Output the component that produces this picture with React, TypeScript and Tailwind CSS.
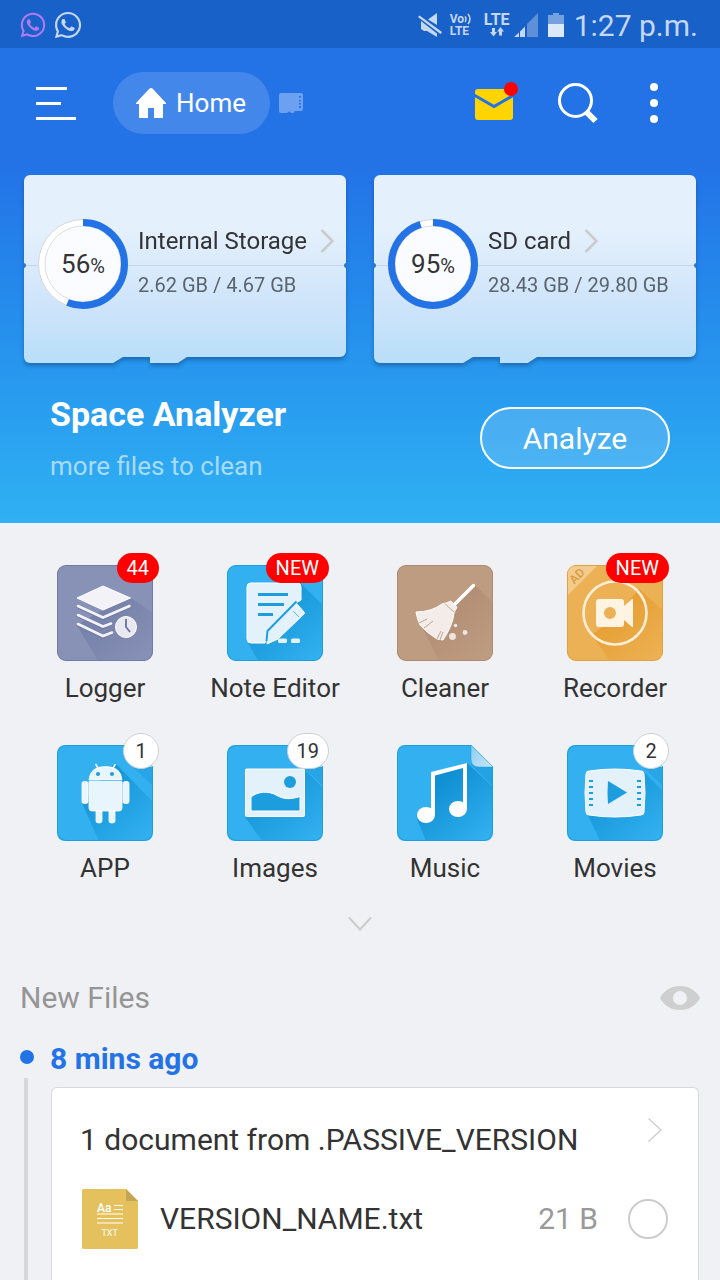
import type { ReactNode } from "react";
import { FaWhatsapp } from "react-icons/fa";

type Tile = {
  name: string;
  icon: ReactNode;
  badge?: string;
  alert?: boolean;
};

const tiles: Tile[] = [
  { name: "Logger", icon: <LoggerIcon />, badge: "44", alert: true },
  { name: "Note Editor", icon: <NoteIcon />, badge: "NEW", alert: true },
  { name: "Cleaner", icon: <CleanerIcon /> },
  { name: "Recorder", icon: <RecorderIcon />, badge: "NEW", alert: true },
  { name: "APP", icon: <AndroidIcon />, badge: "1" },
  { name: "Images", icon: <ImagesIcon />, badge: "19" },
  { name: "Music", icon: <MusicIcon /> },
  { name: "Movies", icon: <MoviesIcon />, badge: "2" },
];

export default function App() {
  return (
    <div className="flex min-h-screen flex-col bg-[#f0f1f4] font-['Roboto',sans-serif] text-[#333333]">
      <StatusBar />
      <div className="bg-linear-to-b from-[#2373e7] from-25% to-[#30b1f3] pb-[41px]">
        <Header />
        <section className="mt-[41px] grid grid-cols-2 gap-7 px-6">
          <StorageCard name="Internal Storage" usage="2.62 GB / 4.67 GB" percent={56} />
          <StorageCard name="SD card" usage="28.43 GB / 29.80 GB" percent={95} />
        </section>
        <section className="mt-[31px] flex items-center justify-between px-[50px]">
          <div>
            <h2 className="text-[34px] leading-10 font-bold text-white">Space Analyzer</h2>
            <p className="mt-4 text-[26px] leading-8 text-white/60">more files to clean</p>
          </div>
          <button className="h-[62px] w-[190px] rounded-full border-2 border-white bg-white/15 text-[30px] text-white">
            Analyze
          </button>
        </section>
      </div>

      <ul className="grid grid-cols-4 gap-y-[41px] px-5 pt-[42px]">
        {tiles.map((t) => (
          <li key={t.name}>
            <TileButton tile={t} />
          </li>
        ))}
      </ul>
      <button aria-label="Show more" className="mt-8 self-center">
        <svg className="h-4 w-6" viewBox="0 0 24 16" fill="none" stroke="#cccccc" strokeWidth="2">
          <path d="M1 1.500 12 13.500 23 1.500" />
        </svg>
      </button>

      <section className="mt-12 flex flex-1 flex-col px-5">
        <div className="flex items-center justify-between">
          <h2 className="text-[30px] leading-9 text-[#959595]">New Files</h2>
          <button aria-label="Toggle visibility">
            <svg className="h-6 w-10" viewBox="0 0 40 24">
              <path
                fill="#cfcfcf"
                fillRule="evenodd"
                d="M0 12C4 4.500 11 0 20 0S36 4.500 40 12C36 19.500 29 24 20 24S4 19.500 0 12ZM20 5A7 7 0 1 0 20 19A7 7 0 1 0 20 5Z"
              />
            </svg>
          </button>
        </div>
        <div className="mt-[25px] flex flex-1 gap-4">
          <div className="flex w-[14px] flex-col">
            <span className="mt-[9px] size-[14px] rounded-full bg-[#2373e7]" />
            <span className="mt-[14px] ml-1 w-1 flex-1 bg-[#d6d7d9]" />
          </div>
          <div className="flex flex-1 flex-col">
            <h3 className="text-[30px] leading-9 font-bold text-[#2373e7]">8 mins ago</h3>
            <FileCard />
          </div>
        </div>
      </section>
    </div>
  );
}

function StatusBar() {
  return (
    <div className="flex h-12 items-center bg-[#1861c8] pt-[2px] pr-[22px] pl-[19px] text-[#c5d7f2]">
      <FaWhatsapp className="size-7 text-[#b27af0]" />
      <FaWhatsapp className="ml-[6px] size-[30px]" />
      <svg className="ml-auto h-6 w-6" viewBox="0 0 24 24" fill="currentColor">
        <path d="M19 0V12L10 6.500ZM3 8 19 20.500V24L9 18H6L3 16ZM0 4 1.500 2.500 24 19 22.500 21Z" />
      </svg>
      <div className="ml-2 w-6 text-[12px] leading-3 font-bold">
        <div className="flex items-center">
          Vo
          <svg className="h-3 w-2" viewBox="0 0 8 12" fill="none" stroke="currentColor" strokeWidth="1.500">
            <path d="M1 3.500Q3 6 1 9M4 1Q8 6 4 11" />
          </svg>
        </div>
        <div>LTE</div>
      </div>
      <div className="ml-[10px] flex w-[26px] flex-col items-center">
        <span className="text-[16px] leading-[14px] font-bold">LTE</span>
        <svg className="h-[10px] w-4" viewBox="0 0 16 10" fill="currentColor">
          <path d="M3 1H6V5H8L4.500 9.500 1 5H3ZM10 8.500H13V4.500H15L11.500 0 8 4.500H10Z" />
        </svg>
      </div>
      <svg className="ml-1 h-6 w-6" viewBox="0 0 24 24" fill="currentColor">
        <path d="M0 24 5 19.500V24ZM6 18.500 11 13.500V24H6Z" />
        <path d="M13 11 24 0V24H13Z" opacity=".4" />
      </svg>
      <svg className="ml-[10px] h-6 w-4" viewBox="0 0 16 24" fill="currentColor">
        <path d="M5 0H11V2H16V11H0V2H5Z" opacity=".55" />
        <path d="M0 11H16V24H0Z" fill="#dce7f7" />
      </svg>
      <span className="ml-[10px] pt-[2px] text-[30px] leading-9">1:27 p.m.</span>
    </div>
  );
}

function Header() {
  return (
    <header className="flex items-center pt-6 pr-[51px] pl-9">
      <button aria-label="Menu">
        <svg className="h-[34px] w-10" viewBox="0 0 40 34" fill="#ffffff">
          <path d="M0 1H31V4H0ZM0 16H25V19H0ZM0 31H40V34H0Z" />
        </svg>
      </button>
      <button className="ml-[37px] flex h-[62px] items-center gap-[10px] rounded-full bg-white/15 pr-6 pl-[23px] text-[26px] text-white">
        <svg className="h-[30px] w-[30px]" viewBox="0 0 30 30" fill="#ffffff">
          <path d="M13.500.600Q15-.600 16.500.600L30 15V16H27V30H18V20H12V30H3V16H0V15Z" />
        </svg>
        Home
      </button>
      <button aria-label="SD card" className="ml-[9px]">
        <svg className="h-5 w-6" viewBox="0 0 24 20">
          <path
            fill="#6ba1f0"
            d="M2 0H22Q24 0 24 2V16Q24 18 22 18H16L14.500 20H11.500V18.500H10L8 20H2Q0 20 0 18V2Q0 0 2 0Z"
          />
          <path d="M20 3h2v1.500h-2zM20 7h2v1.500h-2zM20 10h2v1.500h-2zM20 13h2v2h-2z" fill="#2373e7" />
        </svg>
      </button>
      <div className="ml-auto flex items-center gap-10">
        <button aria-label="Messages">
          <svg className="h-[42px] w-11 overflow-visible" viewBox="0 0 44 42">
            <rect x="2" y="7" width="38" height="31" rx="3" fill="#ffd400" />
            <path d="M1 13 21 24.500 41 13" fill="none" stroke="#2373e7" strokeWidth="3" />
            <circle cx="38" cy="7" r="7" fill="#ff0000" />
          </svg>
        </button>
        <button aria-label="Search">
          <svg className="h-[42px] w-[42px]" viewBox="0 0 42 42" fill="none" stroke="#ffffff">
            <circle cx="18.500" cy="18.500" r="16" strokeWidth="3" />
            <path d="M29 29.500 38.500 39" strokeWidth="6" />
          </svg>
        </button>
        <button aria-label="More options">
          <svg className="h-10 w-[30px]" viewBox="0 0 30 40" fill="#ffffff">
            <circle cx="15" cy="4" r="4" />
            <circle cx="15" cy="20" r="4" />
            <circle cx="15" cy="36" r="4" />
          </svg>
        </button>
      </div>
    </header>
  );
}

function StorageCard({ name, usage, percent }: { name: string; usage: string; percent: number }) {
  const circumference = 2 * Math.PI * 41.5;
  return (
    <article className="relative drop-shadow-[0_3px_2px_rgba(10,60,120,0.45)]">
      <div className="relative flex h-[182px] gap-[10px] overflow-hidden rounded-md rounded-bl-none bg-linear-to-b from-[#e4f0fc] from-30% via-[#d2e6fb] via-65% to-[#bbdff9] pt-11 pl-[14px]">
        <span className="absolute inset-x-0 top-[90px] h-px bg-[#c5d6e8]" />
        <span className="absolute top-[88px] -left-[3px] size-[5px] rounded-full bg-[#2878cc]" />
        <span className="absolute top-[88px] -right-[3px] size-[5px] rounded-full bg-[#2878cc]" />
        <div className="relative size-[90px] shrink-0">
          <svg className="size-full" viewBox="0 0 90 90" fill="none">
            <circle cx="45" cy="45" r="44.500" fill="#ffffff" stroke="#d3d6da" />
            <circle cx="45" cy="45" r="38" fill="#fbfcff" stroke="#dddfe2" />
            <circle
              cx="45"
              cy="45"
              r="41.500"
              stroke="#2373e7"
              strokeWidth="7"
              strokeDasharray={`${(circumference * percent) / 100} ${circumference}`}
              transform="rotate(-90 45 45)"
            />
          </svg>
          <p className="absolute inset-0 flex items-baseline justify-center pt-[30px] text-[26px] leading-[30px]">
            {percent}
            <span className="text-[20px]">%</span>
          </p>
        </div>
        <div className="relative pt-[6px]">
          <a href="#" className="flex items-center gap-[13px] text-[24px] leading-8 whitespace-nowrap">
            {name}
            <svg className="h-6 w-[14px]" viewBox="0 0 14 24" fill="none" stroke="#cbcbcd" strokeWidth="2.500">
              <path d="M1.500 1 12.500 12 1.500 23" />
            </svg>
          </a>
          <p className="mt-4 text-[20px] leading-6 whitespace-nowrap text-[#5a646c]">{usage}</p>
        </div>
      </div>
      <div className="flex gap-[27px]">
        <span className="h-[6px] w-[99px] rounded-bl-md bg-[#bbdff9] [clip-path:polygon(0_0,100%_0,90%_100%,0_100%)]" />
        <span className="h-[6px] w-[37px] bg-[#bbdff9] [clip-path:polygon(0_0,100%_0,75%_100%,0_100%)]" />
      </div>
    </article>
  );
}

function TileButton({ tile }: { tile: Tile }) {
  return (
    <button className="flex w-full flex-col items-center">
      <span className="relative">
        {tile.icon}
        {tile.badge && tile.alert && (
          <span className="absolute -top-3 -right-[6px] h-[30px] rounded-full bg-[#ff0000] px-[10px] text-[20px] leading-[30px] text-white">
            {tile.badge}
          </span>
        )}
        {tile.badge && !tile.alert && (
          <span className="absolute -top-3 -right-[6px] h-9 min-w-9 rounded-full border border-[#cfd0d3] bg-white px-[9px] text-[20px] leading-[34px]">
            {tile.badge}
          </span>
        )}
      </span>
      <span className="mt-[11px] text-[26px] leading-8 whitespace-nowrap">{tile.name}</span>
    </button>
  );
}

function FileCard() {
  return (
    <article className="mx-px mt-[10px] flex-1 rounded-t-md border border-b-0 border-[#d9dadc] bg-white pr-[30px] pb-[30px] pl-7">
      <a href="#" className="flex items-start justify-between pt-[30px]">
        <h4 className="pt-1 text-[30px] leading-9">1 document from .PASSIVE_VERSION</h4>
        <svg className="mr-[6px] h-6 w-[14px]" viewBox="0 0 14 24" fill="none" stroke="#cfcfcf" strokeWidth="1.500">
          <path d="M.500.500 13 12 .500 23.500" />
        </svg>
      </a>
      <label className="mt-[31px] flex items-center">
        <TextFileIcon />
        <span className="ml-[22px] text-[30px] leading-9">VERSION_NAME.txt</span>
        <span className="ml-auto text-[30px] leading-9 text-[#999999]">21 B</span>
        <input
          type="checkbox"
          className="ml-[30px] size-10 appearance-none rounded-full border-2 border-[#cccccc] bg-white checked:bg-[#2373e7]"
        />
      </label>
    </article>
  );
}

function TextFileIcon() {
  return (
    <svg className="ml-[2px] h-[60px] w-14" viewBox="0 0 56 60">
      <path d="M1.500 0H44L56 12V58.500Q56 60 54.500 60H1.500Q0 60 0 58.500V1.500Q0 0 1.500 0Z" fill="#e5c15e" />
      <path d="M44 0 56 12H44Z" fill="#c4a553" />
      <path d="M32 16.500H41M32 20.500H41M15 25H41M15 29.500H41M15 34H41" stroke="#ffffff" strokeWidth="1.200" />
      <text x="15" y="22.500" fontSize="12" fontWeight="500" fill="#ffffff">
        Aa
      </text>
      <text x="19.500" y="47" fontSize="9" fill="#ffffff">
        TXT
      </text>
    </svg>
  );
}

// rounded square behind every tile drawing, with its long shadow cast to the lower right
function Base({
  id,
  fill,
  edge,
  shade,
  shadow,
  fold,
  children,
}: {
  id: string;
  fill: string;
  edge: string;
  shade: string;
  shadow: string;
  fold?: boolean;
  children: ReactNode;
}) {
  return (
    <svg className="block size-24" viewBox="0 0 96 96">
      <defs>
        <linearGradient id={`${id}-shade`} gradientUnits="userSpaceOnUse" x1="40" y1="40" x2="88" y2="96">
          <stop offset="0" stopColor={shade} />
          <stop offset="1" stopColor={shade} stopOpacity="0" />
        </linearGradient>
        <linearGradient id={`${id}-fold`} x1="0" y1="0" x2="1" y2="1">
          <stop offset="0" stopColor="#8accf2" />
          <stop offset="1" stopColor="#c9e7f8" />
        </linearGradient>
        <clipPath id={`${id}-clip`}>
          {fold ? (
            <path d="M9 0H74L96 22V87Q96 96 87 96H9Q0 96 0 87V9Q0 0 9 0Z" />
          ) : (
            <rect width="96" height="96" rx="9" />
          )}
        </clipPath>
      </defs>
      <g clipPath={`url(#${id}-clip)`}>
        <rect width="96" height="96" fill={fill} />
        <path d={shadow} fill={`url(#${id}-shade)`} />
        {fold && <path d="M74 0 96 22V41L74 20Z" fill={shade} opacity=".4" />}
        <rect x=".5" y=".5" width="95" height="95" rx="8.500" fill="none" stroke={edge} />
      </g>
      {fold && <path d="M74 0 96 22H82Q74 22 74 14Z" fill={`url(#${id}-fold)`} stroke={edge} strokeWidth=".5" />}
      {children}
    </svg>
  );
}

function LoggerIcon() {
  return (
    <Base id="logger" fill="#8891b6" edge="#707ba8" shade="#7480a8" shadow="M20 60 41 96H96V48L74 33 46 45Z">
      <g stroke="#707ba8" strokeWidth="4" fill="none">
        <path d="M20 41 46 53 73 41M20 50 46 62 54 58.500M20 59 46 71.500 55 67.500" />
      </g>
      <path d="M20 33 46 21 73.500 33 46 45Z" fill="#f3f3f7" stroke="#ffffff" strokeLinejoin="round" />
      <g stroke="#f4f4f8" strokeWidth="2.600" fill="none" strokeLinecap="round">
        <path d="M21 41 46 52.500 72.500 41M21 50 46 61.500 54 58.500M21 59 46 71 55 67.500" />
      </g>
      <circle cx="69" cy="62" r="10.500" fill="#e8e8f0" stroke="#ffffff" />
      <path d="M69 54V62L73 67" fill="none" stroke="#707ba8" strokeWidth="2" />
    </Base>
  );
}

function NoteIcon() {
  return (
    <Base id="note" fill="#32b0f0" edge="#1c9ddd" shade="#1696d8" shadow="M20 76 31 96H96V40L73 18 60 60Z">
      <path
        d="M24 18H70Q74 18 74 22V35L69 38 41 66 38 78H24Q20 78 20 74V22Q20 18 24 18Z"
        fill="#e2f1fa"
        stroke="#ffffff"
      />
      <path d="M31 29.500H61M31 39.500H57M31 49.500H46" stroke="#1c9ddd" strokeWidth="3" />
      <path
        d="M40 79 41 67 68 39Q69 38 70 39L77 47Q78 48 77 49L51 74Z"
        fill="#e2f1fa"
        stroke="#ffffff"
        strokeLinejoin="round"
      />
      <path d="M39.500 76 40.500 66 69.500 36.500" fill="none" stroke="#1c9ddd" strokeWidth="2" />
      <path d="M66 46 72 52" stroke="#1c9ddd" strokeDasharray="1 .5" />
      <rect x="51" y="73.500" width="9" height="4.500" rx="1.500" fill="#e2f1fa" />
      <rect x="64" y="73.500" width="9" height="4.500" rx="1.500" fill="#e2f1fa" />
    </Base>
  );
}

function CleanerIcon() {
  return (
    <Base id="cleaner" fill="#be9c82" edge="#ae8a70" shade="#b08c73" shadow="M19 50 42 96H96V38L78 20 50 45Z">
      <path d="M76.500 20.500 57 40" stroke="#ffffff" strokeWidth="3.500" strokeLinecap="round" />
      <path
        d="M19 47Q34 47 45 39Q50 38 54 36L60 42Q58 46 57 48Q56 60 46 75L40 74Q30 68 23 60Q20 54 19 47Z"
        fill="#f3ece8"
        stroke="#ffffff"
        strokeLinejoin="round"
      />
      <path
        d="M48 38.500Q52 43 57 47M22 58 30 54M27 63 36 56M40 74 44 66M43 75 46 67"
        fill="none"
        stroke="#c2a48f"
        strokeWidth="1"
      />
      <g fill="#f0e5de">
        <circle cx="58.500" cy="60.500" r="1.800" />
        <circle cx="68" cy="67.500" r="2.400" />
        <circle cx="55.500" cy="71.500" r="3.400" />
      </g>
    </Base>
  );
}

function RecorderIcon() {
  return (
    <Base id="recorder" fill="#ecb155" edge="#e2a03c" shade="#e69d2e" shadow="M25 70 43 96H96V45L72 24 50 50Z">
      <path d="M1 30V9Q1 1 9 1H30Z" fill="#f3cb8c" />
      <text y="4" fontSize="12" fontWeight="500" fill="#d99c3f" textAnchor="middle" transform="translate(10 11) rotate(-45)">
        AD
      </text>
      <circle cx="48" cy="48" r="31.500" fill="none" stroke="#fdeed8" strokeWidth="2.600" />
      <path
        fill="#fff3e2"
        fillRule="evenodd"
        d="M32 34H54Q57 34 57 37V41L65 34H66V62H65L57 55V59Q57 62 54 62H32Q29 62 29 59V37Q29 34 32 34ZM43 42A6 6 0 1 0 43 54A6 6 0 1 0 43 42Z"
      />
    </Base>
  );
}

function AndroidIcon() {
  return (
    <Base id="android" fill="#32b0f0" edge="#1c9ddd" shade="#1696d8" shadow="M25 58 42 96H96V57L58 18Z" fold>
      <g fill="#e8f5fc" stroke="#ffffff" strokeWidth=".8">
        <path d="M32 35Q33 21.500 48.500 21.500T65 35Z" />
        <path d="M32 36.500H65V63Q65 66 62 66H35Q32 66 32 63Z" />
        <rect x="25" y="36.500" width="6" height="22" rx="2" />
        <rect x="66" y="36.500" width="6" height="22" rx="2" />
        <path d="M39 66H45V76Q45 78 42 78T39 76ZM52 66H58V76Q58 78 55 78T52 76Z" />
      </g>
      <path d="M38.500 19 41.500 24M58.500 19 55.500 24" stroke="#ffffff" strokeWidth="1.500" />
      <circle cx="41" cy="29" r="2" fill="#1c9ddd" />
      <circle cx="55" cy="29" r="2" fill="#1c9ddd" />
    </Base>
  );
}

function ImagesIcon() {
  return (
    <Base id="images" fill="#32b0f0" edge="#1c9ddd" shade="#1696d8" shadow="M18 72 35 96H96V43L77 24Z" fold>
      <rect x="18.500" y="24" width="59" height="47.500" rx="1" fill="#e2f1fa" stroke="#ffffff" />
      <path d="M24 52C31 46 42 46 49 50S62 55 73 51.500V66H24Z" fill="#1c9ddd" stroke="#ffffff" />
      <circle cx="63" cy="37" r="6" fill="#1c9ddd" />
    </Base>
  );
}

function MusicIcon() {
  return (
    <Base id="music" fill="#32b0f0" edge="#1c9ddd" shade="#1090d3" shadow="M20 74 29 96H96V42L70 18 35 28 37 66Z" fold>
      <path d="M34 27 70 18V64H66V23L38 30.500V70H34Z" fill="#ffffff" />
      <ellipse cx="29" cy="70" rx="9" ry="8" fill="#ffffff" />
      <ellipse cx="61" cy="64" rx="9" ry="8" fill="#ffffff" />
    </Base>
  );
}

function MoviesIcon() {
  return (
    <Base id="movies" fill="#32b0f0" edge="#1c9ddd" shade="#1696d8" shadow="M20 68 33 96H96V46L76 26Z" fold>
      <path
        d="M22 26Q48 22 74 26Q77 26 77 29Q79 48 77 67Q77 70 74 70Q48 74 22 70Q19 70 19 67Q17 48 19 29Q19 26 22 26Z"
        fill="#e2f1fa"
        stroke="#ffffff"
      />
      <path d="M41 36 60 47.500 41 59Q40 48 41 36Z" fill="#1c9ddd" />
      <path d="M24 35V62M72 35V62" stroke="#1c9ddd" strokeWidth="4" strokeDasharray="2 4" />
    </Base>
  );
}
